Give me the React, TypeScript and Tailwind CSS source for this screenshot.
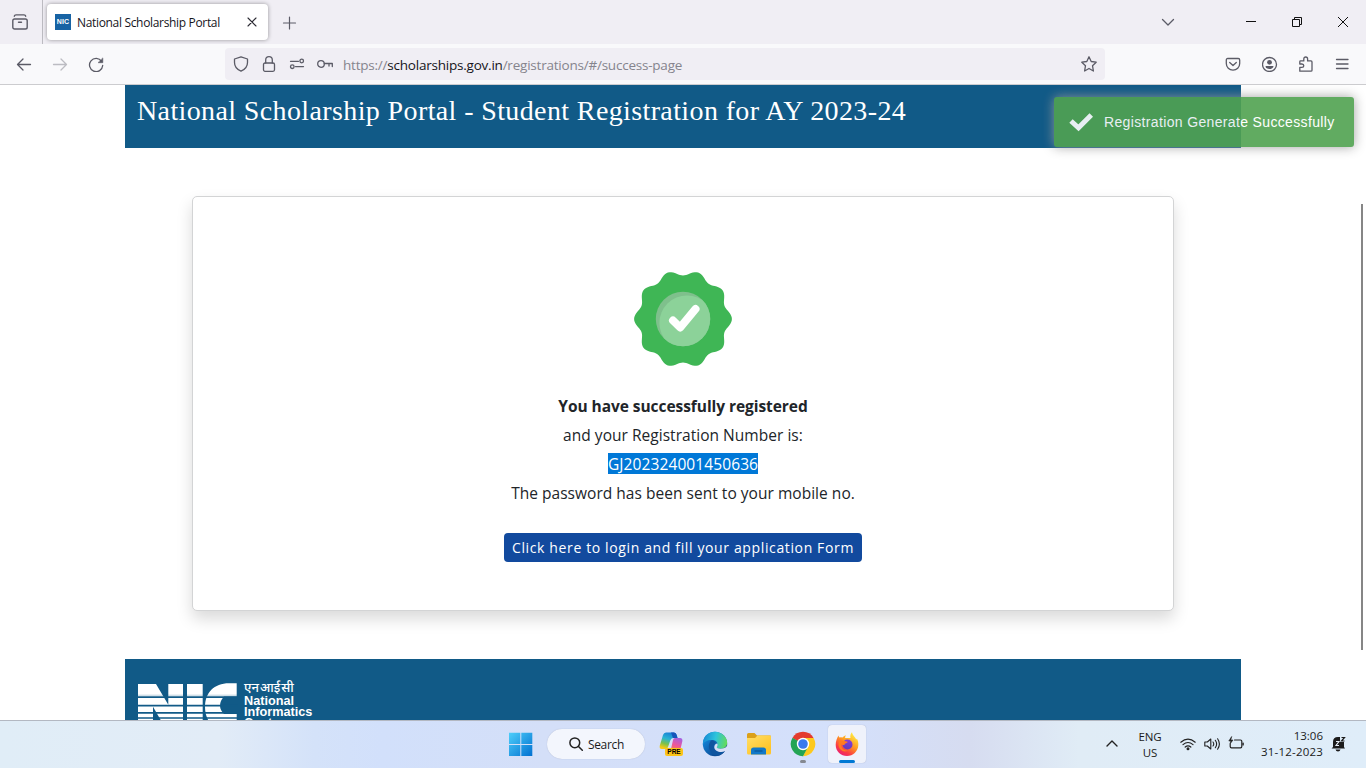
import type { ReactNode } from 'react';

const ui = "font-['Open_Sans','Noto_Sans',sans-serif]";

const sealPath =
  Array.from({ length: 180 }, (_, i) => {
    const a = (i / 180) * Math.PI * 2;
    const r = 46.2 + 2.7 * Math.cos(10 * a);
    return `${i ? 'L' : 'M'}${(49 + r * Math.cos(a)).toFixed(2)} ${(48 + r * Math.sin(a)).toFixed(2)}`;
  }).join('') + 'Z';

function Line({ size = 16, color = '#5b5b66', w = 1.3, children, className = '' }: {
  size?: number; color?: string; w?: number; children: ReactNode; className?: string;
}) {
  return (
    <svg className={`shrink-0 ${className}`} width={size} height={size} viewBox="0 0 16 16" fill="none"
      stroke={color} strokeWidth={w} strokeLinecap="round" strokeLinejoin="round">
      {children}
    </svg>
  );
}

function TabStrip() {
  return (
    <div className="flex h-[44px] shrink-0 items-center bg-[#f0eef4]">
      <div className="flex h-full w-[43px] shrink-0 items-center border-r border-[#bcbbc1] pl-3">
        <Line w={1.4}>
          <rect x=".8" y="5" width="14.4" height="10" rx="1.8" />
          <path d="M2.300 2.200Q2.600 .9 4 .9h8q1.400 0 1.700 1.300M6.500 8.300h3" />
        </Line>
      </div>
      <div className="ml-1 flex h-[36px] w-[221px] shrink-0 items-center rounded-[4px] bg-white pl-2 shadow-[0_0_4px_rgba(0,0,0,0.38)]">
        <span className="flex h-4 w-4 items-center justify-center bg-[#1763a4] font-['Liberation_Sans',sans-serif] text-[7px] font-bold tracking-[0.2px] text-white">NIC</span>
        <span className={`${ui} ml-[6px] w-[167px] whitespace-nowrap pt-[2px] text-[12px] tracking-[-0.33px] text-[#15141a]`}>National Scholarship Portal</span>
        <Line color="#2b2a33" w={1.1}><path d="M4 4l8 8M12 4l-8 8" /></Line>
      </div>
      <Line className="ml-[13px]" w={1.2}><path d="M8.500 3v12M2.500 9h12" /></Line>
      <div className="flex-1" />
      <Line className="mr-[67px]" size={16} w={1.3}><path d="M2.500 5.500L8 11l5.500-5.500" /></Line>
      <svg className="mr-[30px]" width="16" height="16"><path d="M3 7.500h10" stroke="#111" /></svg>
      <svg className="mr-[30px]" width="16" height="16" fill="none" stroke="#111"><path d="M3.500 5.500h7v7h-7zM5.500 5.500v-2h7v7h-2" /></svg>
      <svg className="mr-[15px]" width="16" height="16" fill="none" stroke="#111"><path d="M3 3l10 10M13 3L3 13" /></svg>
    </div>
  );
}

function Toolbar() {
  return (
    <div className="flex h-[41px] shrink-0 items-center border-b border-[#cccccf] bg-[#f9f9fb]">
      <Line className="ml-4"><path d="M14.500 8.500h-13M7 3L1.500 8.500 7 14" /></Line>
      <Line className="ml-5" color="#bcbcc2"><path d="M1.500 8.500h13M9 3l5.500 5.500L9 14" /></Line>
      <Line className="ml-5">
        <path d="M13.600 5.300A6.600 6.600 0 1 0 14.700 9.500" />
        <path d="M14.800 2.300v4.400h-4.400z" fill="#5b5b66" strokeWidth=".6" />
      </Line>
      <div className="ml-[121px] flex h-8 w-[880px] shrink-0 items-center rounded-[4px] bg-[#f0eef4] pl-2">
        <Line><path d="M8 .8L14.500 3v3.500c0 4-2.500 7-6.500 8.700C4 13.500 1.500 10.500 1.500 6.500V3z" /></Line>
        <Line className="ml-3"><rect x="2.500" y="7" width="11" height="8.300" rx="1.500" /><path d="M4.700 7V4a3.300 3.300 0 0 1 6.600 0v3" /></Line>
        <Line className="ml-3"><path d="M1.500 5.300h8M6.500 10.600h8" /><circle cx="12.700" cy="5" r="1.800" /><circle cx="3.300" cy="10.700" r="1.800" /></Line>
        <Line className="ml-3"><circle cx="4" cy="8" r="3.300" /><path d="M7.300 7.500H15.300v3M12 7.500v2.500" /></Line>
        <span className={`${ui} ml-[10px] whitespace-nowrap pt-[2px] text-[13.5px] tracking-[-0.22px] text-[#85848d]`}>https://<span className="text-[#15141a]">scholarships.gov.in</span>/registrations/#/success-page</span>
        <Line className="ml-auto mr-2"><path d="M8 .8l2.200 4.700 5 .7-3.700 3.500.9 5.300L8 12.500l-4.400 2.500.9-5.300L.8 6.200l5-.7z" /></Line>
      </div>
      <div className="flex-1" />
      <Line className="mr-[21px]"><path d="M2.800 2.500h10.400q1.500 0 1.500 1.500v3.500a6.700 6.700 0 0 1-13.400 0V4Q1.300 2.500 2.800 2.500zM4.700 6.500L8 9.500l3.300-3" /></Line>
      <Line className="mr-5"><circle cx="7.500" cy="8.500" r="7" /><circle cx="7.500" cy="6.300" r="2.400" fill="#5b5b66" stroke="none" /><path d="M3.500 10h8c0 2-2 3-4 3s-4-1-4-3z" fill="#5b5b66" stroke="none" /></Line>
      <Line className="mr-5"><path d="M1.800 15.200V11.400h2q2-.2 2-1.700T3.800 8h-2V5.700q0-.8.8-.8h3.200V2.900a1.900 1.900 0 0 1 3.800 0v2H13q1 0 1 1v8.300q0 1-1 1z" /></Line>
      <Line className="mr-4"><path d="M2.500 3.500h11.500M2.500 8h11.500M2.500 12.500h11.500" /></Line>
    </div>
  );
}

function NicLogo() {
  return (
    <svg width="100" height="39" viewBox="0 0 100 39" className="shrink-0">
      <g fill="#fff">
        <path d="M0 3H18L30.300 23.700V3H45V50H29L15 25.700V50H0z" />
        <path d="M49 3h15.700v47H49z" />
        <path d="M98.700 2.300V15.500H86Q82 20 82 24.500T86 33H98.700V50H89C76 50 67 40 67 26S76 2.300 91 2.300z" />
      </g>
      <path d="M0 16.200h100M0 24.600h100M0 31.800h100M0 37h100" stroke="#115a87" strokeWidth="1.700" />
      <path d="M0 14.200h100" stroke="#115a87" strokeOpacity=".35" strokeWidth=".8" />
    </svg>
  );
}

function Page() {
  return (
    <main className="relative flex h-[635px] shrink-0 flex-col items-center overflow-hidden bg-white">
      <header className="flex h-[63px] w-[1116px] shrink-0 items-start bg-[#115a87] pl-3 pt-[5px]">
        <h1 className="whitespace-nowrap font-['Liberation_Serif',serif] text-[28px] leading-[42px] tracking-[0.38px] text-white">National Scholarship Portal - Student Registration for AY 2023-24</h1>
      </header>
      <section className={`${ui} mt-12 flex h-[415px] w-[982px] shrink-0 flex-col items-center rounded-[5px] border border-[#d3d4d5] bg-white pt-[74px] text-[#212529] shadow-[0_8px_16px_rgba(0,0,0,0.15)]`}>
        <svg width="98" height="96" className="shrink-0">
          <defs><clipPath id="disc"><circle cx="49" cy="48" r="27.200" /></clipPath></defs>
          <path d={sealPath} fill="#3fb655" />
          <circle cx="49" cy="48" r="27.200" fill="#7fc08c" />
          <circle cx="53" cy="52" r="27.600" fill="#8cd299" clipPath="url(#disc)" />
          <path d="M39 49.500l7.200 7L61.500 38" fill="none" stroke="#fff" strokeWidth="8" strokeLinecap="round" strokeLinejoin="round" />
        </svg>
        <div className="mt-[25px] flex flex-col items-center whitespace-nowrap text-[15.5px] leading-[29px]">
          <p className="tracking-[-0.06px] font-bold">You have successfully registered</p>
          <p className="tracking-[0.03px]">and your Registration Number is:</p>
          <p className="flex h-[29px] items-start pt-[3px]"><span className="h-[21px] w-[150px] bg-[#0078d7] text-center leading-[22px] tracking-[0.1px] text-white">GJ202324001450636</span></p>
          <p className="tracking-[0.03px]">The password has been sent to your mobile no.</p>
        </div>
        <button className="mt-[25px] h-[29px] w-[358px] whitespace-nowrap rounded-[4px] bg-[#124a9e] pt-[1px] text-[14px] leading-[28px] tracking-[0.63px] text-white">Click here to login and fill your application Form</button>
      </section>
      <footer className="mt-12 flex h-[61px] w-[1116px] shrink-0 items-start overflow-hidden bg-[#115a87] pl-[13px] pt-[22px]">
        <NicLogo />
        <div className="ml-[6px] whitespace-nowrap font-['Liberation_Sans','Noto_Sans_Devanagari',sans-serif] text-[12.7px] font-bold leading-[11px] text-white">
          <p className="h-[15px] text-[13px] font-medium leading-[14px] [word-spacing:-2.5px]">एन आई सी</p>
          <p>National</p>
          <p>Informatics</p>
          <p>Centre</p>
        </div>
      </footer>
      <div className="absolute left-[1054px] top-3 flex h-[50px] w-[300px] items-center rounded-[3px] bg-[#51a351] pl-[15px] opacity-90 shadow-[0_0_12px_#999]">
        <svg width="24" height="20" viewBox="0 0 24 20" className="shrink-0"><path d="M2 9l7.500 6.800L22.300 3" fill="none" stroke="#fff" strokeWidth="5" strokeLinejoin="miter" /></svg>
        <span className="ml-[11px] whitespace-nowrap font-['Liberation_Sans',sans-serif] text-[14px] tracking-[0.35px] text-white">Registration Generate Successfully</span>
      </div>
      <div className="absolute right-[3px] top-[119px] h-[446px] w-[2px] bg-[#868686]" />
    </main>
  );
}

function WindowsLogo() {
  return (
    <svg width="24" height="24" className="shrink-0">
      <defs><linearGradient id="win" x1="0" y1="0" x2="24" y2="24" gradientUnits="userSpaceOnUse"><stop stopColor="#4fd0fb" /><stop offset="1" stopColor="#006fd0" /></linearGradient></defs>
      <path d="M0 .7h11.300V12H0zM12.300.7h11V12h-11zM0 13h11.300v11H0zM12.300 13h11v11h-11z" fill="url(#win)" />
    </svg>
  );
}

function Copilot() {
  return (
    <span className="relative ml-[14px] block h-[26px] w-6 shrink-0">
      <svg width="24" height="26" viewBox="0 0 24 26">
        <defs>
          <linearGradient id="cpa" x1="10" y1="0" x2="5" y2="17" gradientUnits="userSpaceOnUse"><stop stopColor="#1677d8" /><stop offset=".45" stopColor="#2ab5d2" /><stop offset=".75" stopColor="#7cc14c" /><stop offset="1" stopColor="#f5c916" /></linearGradient>
          <linearGradient id="cpb" x1="20" y1="6" x2="14" y2="22" gradientUnits="userSpaceOnUse"><stop stopColor="#9b62ea" /><stop offset=".5" stopColor="#ed569b" /><stop offset="1" stopColor="#fa8c3d" /></linearGradient>
        </defs>
        <path d="M7 1.500h8q2 0 2.700 2.500l.8 3H14q-2 0-2.700 2.500L9 16q-.5 2-2.500 2H3Q0 18 .8 14.500L4 4Q4.800 1.500 7 1.500z" fill="url(#cpa)" />
        <path d="M12 1.500h3q2 0 2.700 2.500l.8 3H14z" fill="#1756ba" />
        <path d="M16 7h5q3 0 2.300 3.500L21 20q-.6 3-3 3H9q-2 0-2.500-3h3q2 0 2.500-2l2-9q.5-2 2-2z" fill="url(#cpb)" />
      </svg>
      <span className="absolute left-[6px] top-[17px] flex h-[8px] w-[18px] items-center justify-center rounded-[2px] bg-[#fcc419] font-['Liberation_Sans',sans-serif] text-[6.5px] font-bold leading-none text-black">PRE</span>
    </span>
  );
}

function Edge() {
  return (
    <svg width="26" height="26" viewBox="0 0 26 26" className="ml-[19px] shrink-0">
      <defs>
        <linearGradient id="eda" x1="1" y1="6" x2="25" y2="12" gradientUnits="userSpaceOnUse"><stop stopColor="#1689d5" /><stop offset=".5" stopColor="#2ec4dc" /><stop offset="1" stopColor="#66dc56" /></linearGradient>
        <linearGradient id="edb" x1="3" y1="10" x2="18" y2="25" gradientUnits="userSpaceOnUse"><stop stopColor="#1380d3" /><stop offset="1" stopColor="#0b3f86" /></linearGradient>
      </defs>
      <circle cx="13" cy="13" r="12.200" fill="url(#edb)" />
      <path d="M.9 12C1.500 5 6.500.8 13 .8S25.200 6 25.200 11.500c0 4-3 6.300-6.500 6.300-3 0-4.400-1-3.700-2 1.200-1.500 1-6.800-5-6.800C5 9 1.500 11 .9 14z" fill="url(#eda)" />
      <path d="M10 9c-3 2-3.800 6-2.500 9.500s5 6.500 8.500 6.200c3.500-.8 6.200-3 7.300-5.400-5 2.400-12 1-11.500-4.500.1-1.500.8-2.500 1.700-3Q12.500 9 10 9z" fill="#0f559f" />
      <path d="M15.300 12.500c.7 1.300.3 2.500-.3 3.300-.7 1 .7 2 3.700 2 2.700 0 5-1 6.300-2.800l2 1-1.500 4-2.700.2c-4 1.700-11 .2-10.500-4.500.2-1.500 1.300-3.200 3-3.200z" fill="#d8e0f6" />
    </svg>
  );
}

function Folder() {
  return (
    <svg width="26" height="24" viewBox="0 0 26 24" className="ml-[18px] shrink-0">
      <defs><linearGradient id="fol" x1="0" y1="3" x2="12" y2="23" gradientUnits="userSpaceOnUse"><stop stopColor="#ffe06b" /><stop offset="1" stopColor="#ffc52a" /></linearGradient></defs>
      <path d="M1 2.500Q1 1 2.500 1h6L11 3.500h13q1 0 1 1V12H1z" fill="#dba01a" />
      <path d="M1 6h8l2.500-2.500H24q1 0 1 1V21q0 1.500-1.500 1.500h-21Q1 22.500 1 21z" fill="url(#fol)" />
      <path d="M5 22.500V18q0-2.500 2.500-2.500h10Q20 15.500 20 18v4.500z" fill="#1279c8" />
      <path d="M8.500 19h8" stroke="#0b5594" strokeWidth="1.200" />
    </svg>
  );
}

function Chrome() {
  return (
    <svg width="26" height="26" viewBox="0 0 26 26" className="ml-[18px] shrink-0">
      <path d="M13 13L2.400 6.900A12.200 12.200 0 0 1 23.600 6.900z" fill="#e33b2e" />
      <path d="M13 13L2.400 6.900A12.200 12.200 0 0 0 13 25.200z" fill="#23a455" />
      <path d="M13 13h6L13 25.200A12.200 12.200 0 0 0 23.600 6.900H13z" fill="#fdc91d" />
      <path d="M8 16L2.400 6.900 8 10zM18 16l-5 9.200L10 18z" fill="#23a455" />
      <circle cx="13" cy="13" r="6.200" fill="#fff" /><circle cx="13" cy="13" r="4.800" fill="#3979ec" />
    </svg>
  );
}

function Firefox() {
  return (
    <svg width="24" height="25" viewBox="0 0 24 25">
      <defs>
        <linearGradient id="ffa" x1="19" y1="3" x2="5" y2="23" gradientUnits="userSpaceOnUse"><stop stopColor="#ffe63f" /><stop offset=".4" stopColor="#ff9a20" /><stop offset=".75" stopColor="#fb3c45" /><stop offset="1" stopColor="#e81d76" /></linearGradient>
        <linearGradient id="ffb" x1="14" y1="6" x2="10" y2="18" gradientUnits="userSpaceOnUse"><stop stopColor="#8d3ce1" /><stop offset="1" stopColor="#5a3eb8" /></linearGradient>
      </defs>
      <path d="M3.500 3.500c.2 1 .5 1.500 1 2Q6 5 7.500 5.500 9 3.500 11 3.200c-.7 1-1 2-.8 2.700L15.500 6c-.6-2 .2-4.500 1.500-5.700.3 2.300 1.600 3.500 3 5.200.5.500 1 1.200 1.200 2L22 6.800c1 2 1.500 4 1.300 6.500C23 19.500 18 24 12 24S.7 19.500.7 13C.7 9 2 6 3.500 3.500z" fill="url(#ffa)" />
      <circle cx="12.500" cy="12.500" r="5" fill="url(#ffb)" />
      <path d="M4 9c3-1.500 5 .3 8 .5 1 0 1 1-.5 1.500s-2 1-2 2c-1.500 0-2.500 0-3.500-1 0 4 3 7 7 6.500C9 21 4 18 3.500 13z" fill="#ff7b20" />
    </svg>
  );
}

function Taskbar() {
  return (
    <div className={`${ui} flex h-12 shrink-0 items-center border-t border-[#b3b8c2] bg-[linear-gradient(90deg,#e0edf7_0%,#e2ecf7_16%,#d4e2f9_23%,#d2e0fb_28%,#d4dff8_40%,#d4e0fb_62%,#d6dcf0_71%,#e0ecf6_79%,#dfedf9_100%)] pb-[1px] text-[#1b1b1b]`}>
      <div className="w-[509px] shrink-0" />
      <WindowsLogo />
      <div className="ml-[14px] flex h-[30px] w-[98px] shrink-0 items-center rounded-full bg-[#f3f6fd] pl-[21px] shadow-[0_0_1px_rgba(80,90,120,0.35)]">
        <Line color="#222" w={1.500}><circle cx="6.800" cy="6.800" r="4.900" /><path d="M10.500 10.500l3.800 3.800" /></Line>
        <span className="ml-[4px] pt-[1px] text-[12px] tracking-[-0.35px]">Search</span>
      </div>
      <Copilot />
      <Edge />
      <Folder />
      <div className="relative flex items-center">
        <Chrome />
        <span className="absolute left-[28px] top-[29px] h-[3px] w-[6px] rounded-full bg-[#858991]" />
      </div>
      <div className="relative ml-[12px] flex h-[38px] w-[38px] shrink-0 items-center justify-center rounded-[4px] bg-[#eff2fb] shadow-[0_0_1px_rgba(80,90,120,0.4)]">
        <Firefox />
        <span className="absolute bottom-0 left-[11px] h-[3px] w-4 rounded-full bg-[#0078d4]" />
      </div>
      <div className="flex-1" />
      <Line className="mr-[18px]" color="#222" w={1.400}><path d="M3 10l5-5 5 5" /></Line>
      <div className="mr-[18px] w-[24px] pt-[2px] text-center text-[11.5px] leading-4 tracking-[-0.1px]"><p>ENG</p><p>US</p></div>
      <Line className="mr-2" color="#222" w={1.200}>
        <path d="M.8 6.200q7.200-6 14.400 0M3 8.600q5-4.200 10 0M5.200 11q2.800-2.400 5.600 0" /><circle cx="8" cy="12.800" r=".9" fill="#222" />
      </Line>
      <Line className="mr-[8px]" color="#222" w={1.100}><path d="M.8 6v4h2.500l3.500 3V3L3.300 6zM9 6q1.500 2 0 4M11.300 4.300q2.700 3.700 0 7.400M13.600 2.800q3.600 5.200 0 10.400" /></Line>
      <Line className="mr-[16px]" color="#222" w={1.200}><path d="M6.500 4h6q1.300 0 1.300 1.300v5.200q0 1.300-1.300 1.300h-9q-1.300 0-1.300-1.300V8M15.200 7v2" /><path d="M3.500.8L.8 5h2L2 8l3-4H3z" fill="#222" strokeWidth=".6" /></Line>
      <div className="mr-2 w-[63px] whitespace-nowrap text-right text-[11.5px] leading-4"><p>13:06</p><p className="flex justify-end tracking-[0.2px]">31-12-2023</p></div>
      <span className="relative mr-[20px] block h-4 w-[15px] shrink-0">
        <svg width="15" height="16"><path d="M2 11V6q0-5 5-5h2v5h4v5l1 1.500H.5zM4.500 13.500h5q-.5 2-2.500 2t-2.500-2z" fill="#1b1b1b" /><path d="M5 5.500h3l-3 4h3" fill="none" stroke="#e8eef8" strokeWidth="1.100" /><path d="M10.500 1.500H13.500l-3 3.500H13.500" fill="none" stroke="#1b1b1b" strokeWidth="1.200" /></svg>
      </span>
    </div>
  );
}

export default function App() {
  return (
    <div className="flex h-[768px] w-[1366px] flex-col overflow-hidden bg-white">
      <TabStrip />
      <Toolbar />
      <Page />
      <Taskbar />
    </div>
  );
}
